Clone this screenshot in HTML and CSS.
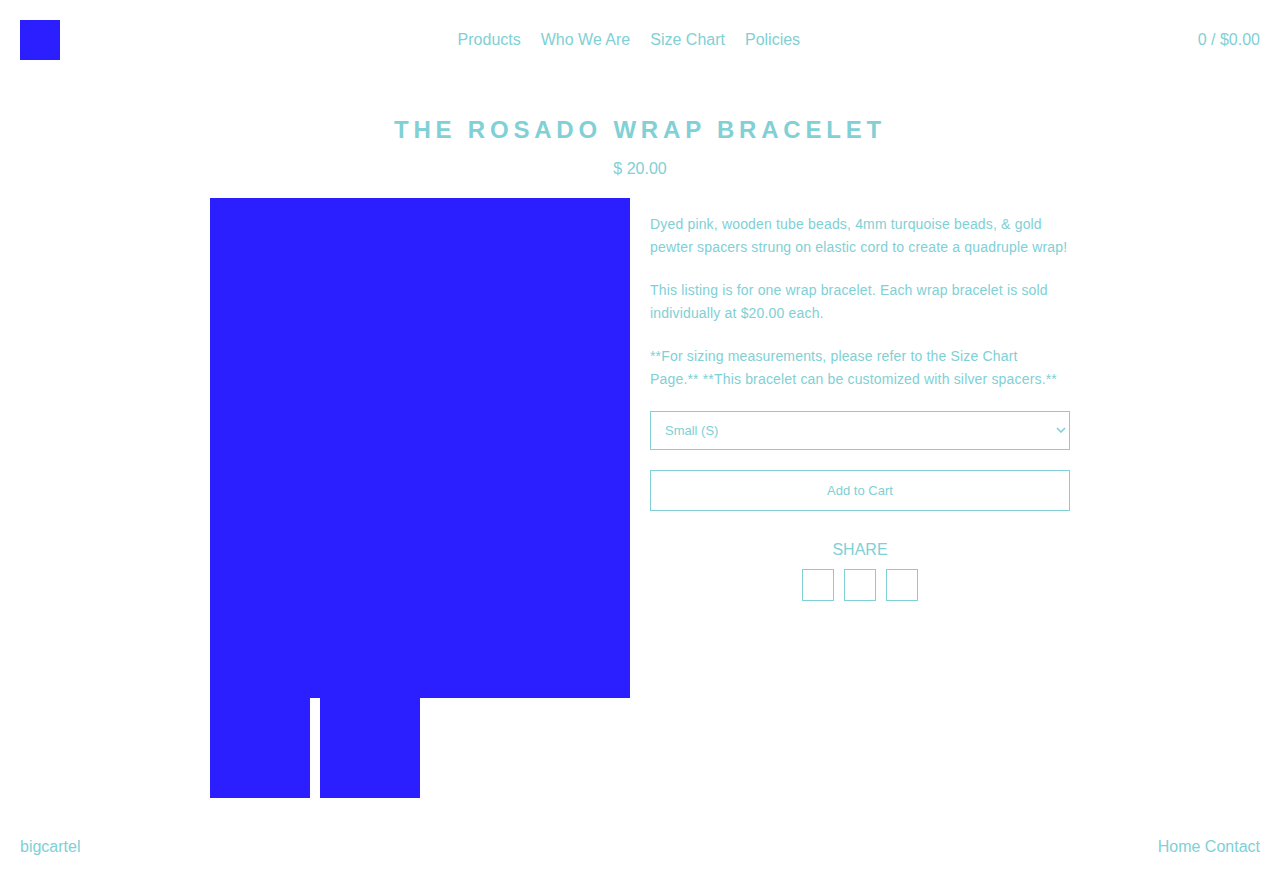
FILE: index.html
```html
<!DOCTYPE html>
<html lang="en">
<head>
<meta charset="utf-8">
<title>The Rosado Wrap Bracelet</title>
<link rel="stylesheet" href="styles.css">
</head>
<body>
<header class="site-header">
  <a class="logo" href="#"></a>
  <nav class="main-nav">
    <a href="#">Products</a>
    <a href="#">Who We Are</a>
    <a href="#">Size Chart</a>
    <a href="#">Policies</a>
  </nav>
  <a class="cart" href="#">0 / $0.00</a>
</header>

<main class="product">
  <h1 class="product-title">THE ROSADO WRAP BRACELET</h1>
  <div class="product-price">$ 20.00</div>
  <div class="product-body">
    <div class="gallery">
      <div class="main-image"></div>
      <div class="thumbs">
        <div class="thumb"></div>
        <div class="thumb"></div>
      </div>
    </div>
    <div class="info">
      <p>Dyed pink, wooden tube beads, 4mm turquoise beads, &amp; gold pewter spacers strung on elastic cord to create a quadruple wrap!</p>
      <p>This listing is for one wrap bracelet. Each wrap bracelet is sold individually at $20.00 each.</p>
      <p>**For sizing measurements, please refer to the Size Chart Page.** **This bracelet can be customized with silver spacers.**</p>
      <div class="select-wrap">
        <select class="option-select">
          <option>Small (S)</option>
          <option>Medium (M)</option>
          <option>Large (L)</option>
        </select>
        <svg class="chevron" width="10" height="6" viewBox="0 0 10 6"><path d="M1 1l4 4 4-4" fill="none" stroke="#80d0d5" stroke-width="1.6"/></svg>
      </div>
      <button class="add-btn" type="button">Add to Cart</button>
      <div class="share">
        <div class="share-title">SHARE</div>
        <div class="share-links">
          <a class="share-box" href="#"></a>
          <a class="share-box" href="#"></a>
          <a class="share-box" href="#"></a>
        </div>
      </div>
    </div>
  </div>
</main>

<footer class="site-footer">
  <a href="#">bigcartel</a>
  <div class="footer-links"><a href="#">Home</a> <a href="#">Contact</a></div>
</footer>
</body>
</html>
```

FILE: styles.css
```css
* { box-sizing: border-box; }

html, body {
  margin: 0;
  padding: 0;
  background: #ffffff;
}

body {
  font-family: "Liberation Sans", Arial, sans-serif;
  color: #80d0d5;
  font-size: 16px;
}

a {
  color: #80d0d5;
  text-decoration: none;
}

.site-header {
  display: flex;
  align-items: center;
  padding: 20px;
  height: 80px;
}

.logo {
  display: block;
  width: 40px;
  height: 40px;
  background: #2b1fff;
}

.main-nav {
  flex: 1;
  display: flex;
  justify-content: center;
  gap: 20px;
  font-size: 16px;
  line-height: 19px;
  margin-top: -2px;
}

.cart {
  font-size: 16px;
  line-height: 19px;
  margin-top: -2px;
}

.product {
  width: 860px;
  margin: 0 auto;
}

.product-title {
  margin: 35px 0 0;
  text-align: center;
  font-size: 24px;
  line-height: 29px;
  font-weight: bold;
  letter-spacing: 4.8px;
}

.product-price {
  text-align: center;
  font-size: 16px;
  line-height: 19px;
  margin-top: 15px;
}

.product-body {
  display: flex;
  gap: 20px;
  margin-top: 20px;
}

.gallery {
  width: 420px;
  flex: none;
}

.main-image {
  width: 420px;
  height: 500px;
  background: #2b1fff;
}

.thumbs {
  display: flex;
  gap: 10px;
}

.thumb {
  width: 100px;
  height: 100px;
  background: #2b1fff;
}

.info {
  width: 420px;
  flex: none;
  padding-top: 15px;
}

.info p {
  margin: 0 0 20px;
  font-size: 14px;
  line-height: 23px;
  letter-spacing: 0.17px;
}

.select-wrap {
  position: relative;
}

.option-select {
  display: block;
  width: 100%;
  height: 39px;
  -webkit-appearance: none;
  appearance: none;
  border: 1px solid #80d0d5;
  border-radius: 0;
  background: #fff;
  color: #80d0d5;
  font-family: "Liberation Sans", Arial, sans-serif;
  font-size: 13px;
  padding: 0 14px;
  outline: none;
}

.chevron {
  position: absolute;
  right: 4px;
  top: 16px;
}

.add-btn {
  display: block;
  width: 100%;
  height: 41px;
  margin-top: 20px;
  border: 1px solid #80d0d5;
  border-radius: 0;
  background: #fff;
  color: #80d0d5;
  font-family: "Liberation Sans", Arial, sans-serif;
  font-size: 13px;
  padding: 0;
}

.share {
  margin-top: 29px;
  text-align: center;
}

.share-title {
  font-size: 16px;
  line-height: 19px;
}

.share-links {
  display: flex;
  justify-content: center;
  gap: 10px;
  margin-top: 10px;
}

.share-box {
  display: block;
  width: 32px;
  height: 32px;
  border: 1px solid #80d0d5;
}

.site-footer {
  display: flex;
  justify-content: space-between;
  padding: 39px 20px 20px;
  font-size: 16px;
  line-height: 19px;
}
```
